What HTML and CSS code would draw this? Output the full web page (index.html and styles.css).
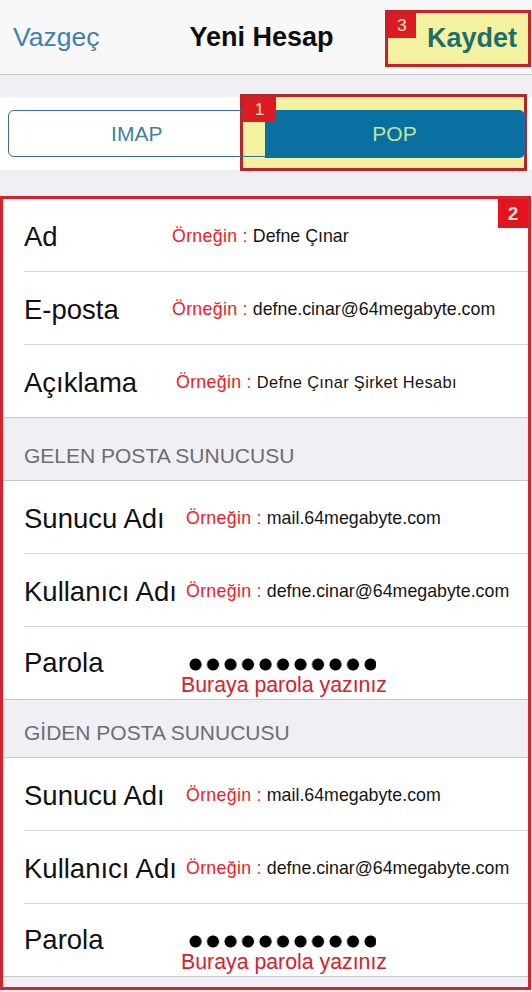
FILE: index.html
```html
<!DOCTYPE html>
<html lang="tr">
<head>
    <meta charset="UTF-8">
    <meta name="viewport" content="width=device-width, initial-scale=1.0">
    <title>Yeni Hesap</title>
    <link rel="stylesheet" href="styles.css">
</head>
<body>
<header class="navbar">
    <span class="nav-cancel">Vazgeç</span>
    <span class="nav-title">Yeni Hesap</span>
    <span class="nav-save">
        <span class="badge">3</span>
        Kaydet
    </span>
</header>

<div class="type-band">
    <div class="type-mark">
        <span class="badge">1</span>
    </div>
    <div class="segment">
        <span class="segment-item">IMAP</span>
        <span class="segment-item active">POP</span>
    </div>
</div>

<section class="form-mark">
    <span class="badge badge-right">2</span>

    <div class="group">
        <div class="row">
            <span class="label">Ad</span>
            <span class="value"><span class="hint">Örneğin :</span> Defne Çınar</span>
        </div>
        <div class="row">
            <span class="label">E-posta</span>
            <span class="value"><span class="hint">Örneğin :</span> defne.cinar@64megabyte.com</span>
        </div>
        <div class="row">
            <span class="label">Açıklama</span>
            <span class="value value-wide"><span class="hint">Örneğin :</span> Defne Çınar Şirket Hesabı</span>
        </div>
    </div>

    <div class="section-head">GELEN POSTA SUNUCUSU</div>

    <div class="group group-server">
        <div class="row">
            <span class="label">Sunucu Adı</span>
            <span class="value"><span class="hint">Örneğin :</span> mail.64megabyte.com</span>
        </div>
        <div class="row">
            <span class="label">Kullanıcı Adı</span>
            <span class="value"><span class="hint">Örneğin :</span> defne.cinar@64megabyte.com</span>
        </div>
        <div class="row row-secret">
            <span class="label">Parola</span>
            <div class="secret">
                <span class="dots" role="img" aria-label="parola"></span>
                <span class="secret-note">Buraya parola yazınız</span>
            </div>
        </div>
    </div>

    <div class="section-head section-head-tight">GİDEN POSTA SUNUCUSU</div>

    <div class="group group-server">
        <div class="row">
            <span class="label">Sunucu Adı</span>
            <span class="value"><span class="hint">Örneğin :</span> mail.64megabyte.com</span>
        </div>
        <div class="row">
            <span class="label">Kullanıcı Adı</span>
            <span class="value"><span class="hint">Örneğin :</span> defne.cinar@64megabyte.com</span>
        </div>
        <div class="row row-secret">
            <span class="label">Parola</span>
            <div class="secret">
                <span class="dots" role="img" aria-label="parola"></span>
                <span class="secret-note">Buraya parola yazınız</span>
            </div>
        </div>
    </div>
    <div class="form-end"></div>
</section>
</body>
</html>
```

FILE: styles.css
```css
:root {
    --ios-bg: #efeff4;
    --ios-line: #c8c7cc;
    --mark-red: #d3232c;
    --mark-yellow: #f4f1a1;
    --hint-red: #ee1c25;
}

html {
    background-color: var(--ios-bg);
    font-family: "Liberation Sans", Arial, sans-serif;
    color: #111111;
}

body {
    margin: 0;
    width: 532px;
    overflow: hidden;
}

/* top bar */

.navbar {
    display: flex;
    align-items: center;
    height: 74px;
    padding-left: 13px;
    background-color: #f8f8f8;
    border-bottom: 1px solid var(--ios-line);
    font-size: 26.5px;
}

.nav-cancel {
    color: #3d80b2;
}

.nav-title {
    margin-left: 90px;
    font-size: 27px;
    font-weight: bold;
    color: #0d0d0d;
}

.nav-save {
    position: relative;
    box-sizing: border-box;
    width: 146px;
    height: 57px;
    margin-left: auto;
    margin-right: 1px;
    margin-top: 3px;
    padding-right: 11px;
    display: flex;
    align-items: center;
    justify-content: flex-end;
    border: 3px solid #c52128;
    background-color: var(--mark-yellow);
    color: #1d6e6d;
    font-weight: bold;
    font-size: 27px;
}

.badge {
    position: absolute;
    top: 0;
    left: 0;
    width: 28px;
    height: 25px;
    display: flex;
    align-items: center;
    justify-content: center;
    background-color: #dc1b22;
    color: #fbe6c4;
    font-size: 17px;
    font-weight: normal;
    line-height: 1;
}

/* IMAP / POP switch */

.type-band {
    position: relative;
    margin-top: 22px;
    height: 73px;
    padding: 13px 8px 0;
    box-sizing: border-box;
    background-color: #ffffff;
}

.type-mark {
    position: absolute;
    top: -3px;
    left: 240px;
    right: 5px;
    height: 77px;
    box-sizing: border-box;
    border: 3px solid #b72429;
    background-color: var(--mark-yellow);
}

.type-mark .badge {
    z-index: 2;
    width: 33px;
}

.segment {
    position: relative;
    z-index: 1;
    display: flex;
    height: 47px;
    box-sizing: border-box;
    border: 1.5px solid #3b6f86;
    border-radius: 6px;
}

.segment-item {
    flex: 1;
    display: flex;
    align-items: center;
    justify-content: center;
    font-size: 21px;
    color: #437f9e;
}

.segment-item.active {
    flex: 0 0 260px;
    margin: -1.5px -1.5px -1.5px 0;
    background-color: #0a6fa1;
    border-radius: 0 6px 6px 0;
    color: #bfe79c;
}

/* account form */

.form-mark {
    position: relative;
    margin-top: 26px;
    width: 531px;
    box-sizing: border-box;
    border: 3px solid var(--mark-red);
}

.badge-right {
    left: auto;
    right: 0;
    z-index: 2;
    width: 30px;
    height: 29px;
    background-color: #e3141e;
    font-size: 19px;
    font-weight: bold;
    color: #f6dede;
}

.group {
    background-color: #ffffff;
    border-bottom: 1px solid var(--ios-line);
}

.group-server {
    border-top: 1px solid var(--ios-line);
}

.row {
    display: flex;
    align-items: center;
    height: 72px;
    margin-left: 21px;
    border-bottom: 1px solid #d6d6da;
}

.row:last-child {
    border-bottom: none;
}

.label {
    flex: 0 0 148px;
    padding-top: 3px;
    font-size: 27.5px;
    color: #111111;
}

.group-server .label {
    flex-basis: 162px;
}

.value {
    padding-top: 3px;
    font-size: 17.8px;
    color: #151515;
    white-space: nowrap;
}

.value-wide {
    padding-left: 4px;
    font-size: 16.4px;
    letter-spacing: 0.35px;
}

.hint {
    color: var(--hint-red);
    letter-spacing: 0.3px;
}

.value-wide .hint {
    font-size: 17.8px;
    letter-spacing: 0.3px;
}

/* password row: masked dots with a note under them */

.row-secret {
    align-items: flex-start;
}

.row-secret .label {
    margin-top: 20px;
    padding-top: 0;
}

.secret {
    display: flex;
    flex-direction: column;
    margin-left: -5px;
    padding-top: 31px;
}

.dots {
    display: block;
    width: 187px;
    height: 13px;
    margin-left: 8px;
    background: radial-gradient(circle at 6.5px 6.5px, #000000 5.6px, transparent 6.4px) 0 0 / 17.5px 13px repeat-x;
}

.secret-note {
    margin-top: 2px;
    font-size: 21.3px;
    line-height: 24px;
    color: #d4222c;
}

.section-head {
    height: 62px;
    box-sizing: border-box;
    display: flex;
    align-items: flex-end;
    padding: 0 0 12px 21px;
    font-size: 21px;
    color: #6d6d72;
}

.section-head-tight {
    height: 57px;
}

.form-end {
    height: 10px;
}
```
